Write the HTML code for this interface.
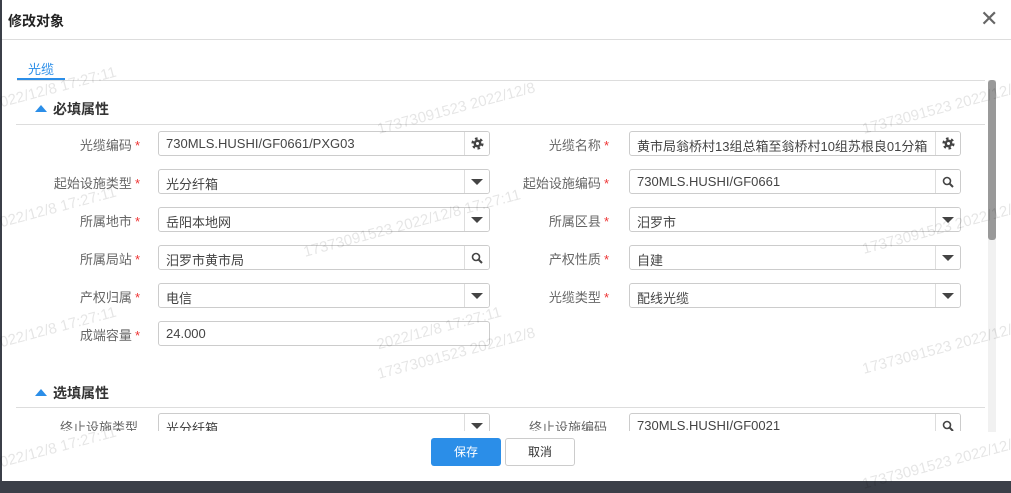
<!DOCTYPE html>
<html><head><meta charset="utf-8"><style>
*{box-sizing:border-box;margin:0;padding:0}
body{width:1011px;height:486px;background:#3b3f48;font-family:"Liberation Sans","Noto Sans CJK SC",sans-serif;position:relative;overflow:hidden}
.dlg{position:absolute;left:2px;top:0;width:1009px;height:481px;background:#fff}
.abs{position:absolute}
.title{left:6px;top:11px;font-size:14px;font-weight:bold;color:#222}
.close{left:978px;top:6px;font-size:22px;color:#666}
.lbl{font-size:13px;color:#666;text-align:right;width:140px}
.lbl b{color:#e33;font-weight:normal;margin-left:3px}
.inp{height:25px;border:1px solid #ccc;border-radius:3px;background:#fff;font-size:13px;color:#444;padding:4px 7px;white-space:nowrap;overflow:hidden}
.btn{position:absolute;right:0;top:0;width:25px;height:23px;border-left:1px solid #ddd;display:flex;align-items:center;justify-content:center;background:#fff}
.tri{width:0;height:0;border-left:6px solid transparent;border-right:6px solid transparent;border-top:6px solid #444}
.sec{font-size:14px;font-weight:bold;color:#333}
.sec i{display:inline-block;width:0;height:0;border-left:6px solid transparent;border-right:6px solid transparent;border-bottom:7px solid #2b8ee8;margin-right:6px;vertical-align:2px}
.wm{position:absolute;color:rgba(0,0,0,0.1);font-size:15px;transform:rotate(-15deg);white-space:nowrap}
</style></head><body>
<div class="dlg">
<div class="abs title">修改对象</div>
<div class="abs close">✕</div>
<div class="abs" style="left:0;top:39px;width:1009px;height:1px;background:#ddd"></div>
<div class="abs" style="left:26px;top:59px;font-size:13px;color:#2b8ee8">光缆</div>
<div class="abs" style="left:15px;top:78px;width:48px;height:2px;background:#2b8ee8"></div>
<div class="abs" style="left:15px;top:80px;width:968px;height:1px;background:#ddd"></div>
<div class="abs" style="left:986px;top:80px;width:8px;height:352px;background:#f1f1f1"></div>
<div class="abs" style="left:986px;top:80px;width:8px;height:160px;background:#999;border-radius:3px"></div>

<div class="abs sec" style="left:33px;top:99px"><i></i>必填属性</div>
<div class="abs" style="left:14px;top:124px;width:969px;height:1px;background:#ddd"></div>

<div class="abs sec" style="left:33px;top:383px"><i></i>选填属性</div>
<div class="abs" style="left:14px;top:407px;width:969px;height:1px;background:#ddd"></div>

<div class="abs" style="left:429px;top:438px;width:70px;height:28px;background:#2b8ee8;border-radius:3px;color:#fff;font-size:12px;text-align:center;line-height:28px">保存</div>
<div class="abs" style="left:503px;top:438px;width:70px;height:28px;border:1px solid #ccc;border-radius:3px;color:#333;font-size:12px;text-align:center;line-height:26px">取消</div>
</div>

<div class="abs lbl" style="left:0;top:135px">光缆编码<b>*</b></div>
<div class="abs inp" style="left:158px;top:131px;width:332px">730MLS.HUSHI/GF0661/PXG03<div class="btn"><svg width="13" height="13" viewBox="0 0 12 12"><circle cx="6" cy="6" r="4.3" fill="none" stroke="#444" stroke-width="2.6" stroke-dasharray="2.2 2.3"/><circle cx="6" cy="6" r="3.6" fill="#444"/><circle cx="6" cy="6" r="1.4" fill="#fff"/></svg></div></div>
<div class="abs lbl" style="left:469px;top:135px">光缆名称<b>*</b></div>
<div class="abs inp" style="left:629px;top:131px;width:332px;padding-right:30px">黄市局翁桥村13组总箱至翁桥村10组苏根良01分箱<div class="btn"><svg width="13" height="13" viewBox="0 0 12 12"><circle cx="6" cy="6" r="4.3" fill="none" stroke="#444" stroke-width="2.6" stroke-dasharray="2.2 2.3"/><circle cx="6" cy="6" r="3.6" fill="#444"/><circle cx="6" cy="6" r="1.4" fill="#fff"/></svg></div></div>

<div class="abs lbl" style="left:0;top:173px">起始设施类型<b>*</b></div>
<div class="abs inp" style="left:158px;top:169px;width:332px">光分纤箱<div class="btn"><div class="tri"></div></div></div>
<div class="abs lbl" style="left:469px;top:173px">起始设施编码<b>*</b></div>
<div class="abs inp" style="left:629px;top:169px;width:332px">730MLS.HUSHI/GF0661<div class="btn"><svg width="12" height="12" viewBox="0 0 12 12"><circle cx="5" cy="5" r="3.5" fill="none" stroke="#444" stroke-width="1.6"/><path d="M7.5 7.5L11 11" stroke="#444" stroke-width="2"/></svg></div></div>

<div class="abs lbl" style="left:0;top:211px">所属地市<b>*</b></div>
<div class="abs inp" style="left:158px;top:207px;width:332px">岳阳本地网<div class="btn"><div class="tri"></div></div></div>
<div class="abs lbl" style="left:469px;top:211px">所属区县<b>*</b></div>
<div class="abs inp" style="left:629px;top:207px;width:332px">汨罗市<div class="btn"><div class="tri"></div></div></div>

<div class="abs lbl" style="left:0;top:249px">所属局站<b>*</b></div>
<div class="abs inp" style="left:158px;top:245px;width:332px">汨罗市黄市局<div class="btn"><svg width="12" height="12" viewBox="0 0 12 12"><circle cx="5" cy="5" r="3.5" fill="none" stroke="#444" stroke-width="1.6"/><path d="M7.5 7.5L11 11" stroke="#444" stroke-width="2"/></svg></div></div>
<div class="abs lbl" style="left:469px;top:249px">产权性质<b>*</b></div>
<div class="abs inp" style="left:629px;top:245px;width:332px">自建<div class="btn"><div class="tri"></div></div></div>

<div class="abs lbl" style="left:0;top:287px">产权归属<b>*</b></div>
<div class="abs inp" style="left:158px;top:283px;width:332px">电信<div class="btn"><div class="tri"></div></div></div>
<div class="abs lbl" style="left:469px;top:287px">光缆类型<b>*</b></div>
<div class="abs inp" style="left:629px;top:283px;width:332px">配线光缆<div class="btn"><div class="tri"></div></div></div>

<div class="abs lbl" style="left:0;top:325px">成端容量<b>*</b></div>
<div class="abs inp" style="left:158px;top:321px;width:332px">24.000</div>

<div style="position:absolute;left:0;top:408px;width:985px;height:23px;overflow:hidden">
<div class="abs lbl" style="left:0;top:9px;width:138px">终止设施类型</div>
<div class="abs inp" style="left:158px;top:5px;width:332px">光分纤箱<div class="btn"><div class="tri"></div></div></div>
<div class="abs lbl" style="left:469px;top:9px;width:138px">终止设施编码</div>
<div class="abs inp" style="left:629px;top:5px;width:332px">730MLS.HUSHI/GF0021<div class="btn"><svg width="12" height="12" viewBox="0 0 12 12"><circle cx="5" cy="5" r="3.5" fill="none" stroke="#444" stroke-width="1.6"/><path d="M7.5 7.5L11 11" stroke="#444" stroke-width="2"/></svg></div></div>
</div>

<div class="wm" style="left:-10px;top:80px">2022/12/8 17:27:11</div>
<div class="wm" style="left:375px;top:100px">17373091523 2022/12/8</div>
<div class="wm" style="left:860px;top:100px">17373091523 2022/12/8</div>
<div class="wm" style="left:-10px;top:200px">2022/12/8 17:27:11</div>
<div class="wm" style="left:300px;top:215px">17373091523 2022/12/8 17:27:11</div>
<div class="wm" style="left:860px;top:220px">17373091523 2022/12/8</div>
<div class="wm" style="left:-10px;top:320px">2022/12/8 17:27:11</div>
<div class="wm" style="left:375px;top:320px">2022/12/8 17:27:11</div>
<div class="wm" style="left:375px;top:345px">17373091523 2022/12/8</div>
<div class="wm" style="left:860px;top:340px">17373091523 2022/12/8</div>
<div class="wm" style="left:-10px;top:440px">2022/12/8 17:27:11</div>
<div class="wm" style="left:860px;top:455px">17373091523 2022/12/8</div>
</body></html>
